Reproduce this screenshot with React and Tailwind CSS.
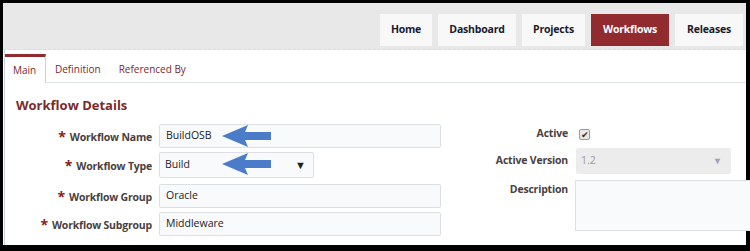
import React from 'react';

const NAV = [
  { label: 'Home', w: 'w-[52px]' },
  { label: 'Dashboard', w: 'w-[78px]' },
  { label: 'Projects', w: 'w-[63px]' },
  { label: 'Workflows', w: 'w-[78px]' },
  { label: 'Releases', w: 'w-[68px]' },
];
const TABS = ['Main', 'Definition', 'Referenced By'];

const Arrow = () => (
  <svg width="50" height="22" viewBox="0 0 50 22" className="absolute left-[63px] top-[1px]">
    <path d="M0 11 L26 0 L23 7 L49 7 L49 15 L23 15 L26 22 Z" fill="#4a7cc9" />
  </svg>
);

const Label = ({ children }) => (
  <div className="w-[154px] pr-[7px] text-right text-[10.5px] tracking-[-0.2px] font-bold text-[#4a4040] leading-none">
    <span className="text-[#8b1a1a] text-[14px] mr-[4px] relative top-[1px]">*</span>
    {children}
  </div>
);

const Field = ({ value }) => (
  <div className="w-[282px] h-[24px] border border-[#dde0e3] bg-[#f9fafc] rounded-[2px] flex items-center px-[6px] text-[10.5px] text-[#222]">
    {value}
  </div>
);

const RightLabel = ({ children, className = '' }) => (
  <div className={`w-[90px] text-right text-[10.5px] tracking-[-0.2px] font-bold text-[#4a4040] ${className}`}>
    {children}
  </div>
);

export default function App() {
  return (
    <div className="w-[750px] h-[251px] bg-black pt-[3px] pl-[3px] pr-[4px] pb-[6px] font-['Open_Sans',sans-serif] overflow-hidden">
      <div className="h-full bg-white flex flex-col">
        {/* Header nav */}
        <div className="h-[47px] shrink-0 bg-[#e8e8e8] flex justify-end items-start pt-[11px] pr-[3px] gap-[6px] border-b border-dashed border-[#dcdcdc]">
          {NAV.map(n => (
            <div
              key={n.label}
              className={`${n.w} h-[32px] flex items-center justify-center text-[10.5px] tracking-[-0.2px] font-bold ${
                n.label === 'Workflows' ? 'bg-[#922b2f] text-white' : 'bg-[#f8f8f8] text-[#1a1a2e]'
              }`}
            >
              {n.label}
            </div>
          ))}
        </div>

        <div className="flex-1 border-l border-[#c9d4e3] ml-[1px]">
          {/* Tabs */}
          <div className="flex items-end h-[30px] mt-[3px] border-b border-[#dde2ea]">
            {TABS.map((t, i) => (
              <div
                key={t}
                className={`h-full flex items-center text-[10px] text-[#7a2a2a] ${
                  i === 0
                    ? 'border-t-[3px] border-t-[#922b2f] border-r border-[#c9d4e3] bg-white -mb-px w-[41px] pl-[8px] pt-[1px]'
                    : 'pt-[4px] px-[9px]'
                }`}
              >
                {t}
              </div>
            ))}
          </div>

          <div className="pl-[11px] pt-[16px] text-[13px] font-bold text-[#7b2a2a] leading-none">
            Workflow Details
          </div>

          <div className="flex mt-[12px]">
            {/* Left column */}
            <div className="flex flex-col">
              <div className="flex items-center">
                <Label>Workflow Name</Label>
                <div className="relative">
                  <Field value="BuildOSB" />
                  <Arrow />
                </div>
              </div>
              <div className="flex items-center mt-[4px]">
                <Label>Workflow Type</Label>
                <div className="relative">
                  <div className="w-[155px] h-[26px] border border-[#dde0e3] bg-[#f9fafc] rounded-[2px] flex items-center justify-between pl-[5px] pr-[7px] text-[10.5px] text-[#222]">
                    Build
                    <span className="text-[11px] text-[#222]">▼</span>
                  </div>
                  <Arrow />
                </div>
              </div>
              <div className="flex items-center mt-[6px]">
                <Label>Workflow Group</Label>
                <Field value="Oracle" />
              </div>
              <div className="flex items-center mt-[4px]">
                <Label>Workflow Subgroup</Label>
                <Field value="Middleware" />
              </div>
            </div>

            {/* Right column */}
            <div className="flex flex-col ml-[37px]">
              <div className="flex items-center mt-[2px] h-[16px]">
                <RightLabel>Active</RightLabel>
                <span className="ml-[11px] w-[11px] h-[11px] border border-[#9a9a9a] bg-[#e8e8e8] rounded-[2px] flex items-center justify-center text-[9px] leading-none text-[#333]">✔</span>
              </div>
              <div className="flex items-center mt-[6px]">
                <RightLabel>Active Version</RightLabel>
                <div className="ml-[8px] w-[155px] h-[26px] bg-[#ececec] rounded-[2px] flex items-center justify-between px-[5px] text-[10.5px] text-[#9a9aaa]">
                  1.2
                  <span className="text-[9px] text-[#a99ac0] pr-[4px]">▼</span>
                </div>
              </div>
              <div className="flex items-start mt-[6px]">
                <RightLabel className="pt-[2px]">Description</RightLabel>
                <div className="ml-[7px] w-[200px] h-[51px] border border-[#dde0e3] bg-[#f9fafc]" />
              </div>
            </div>
          </div>
        </div>
      </div>
    </div>
  );
}
